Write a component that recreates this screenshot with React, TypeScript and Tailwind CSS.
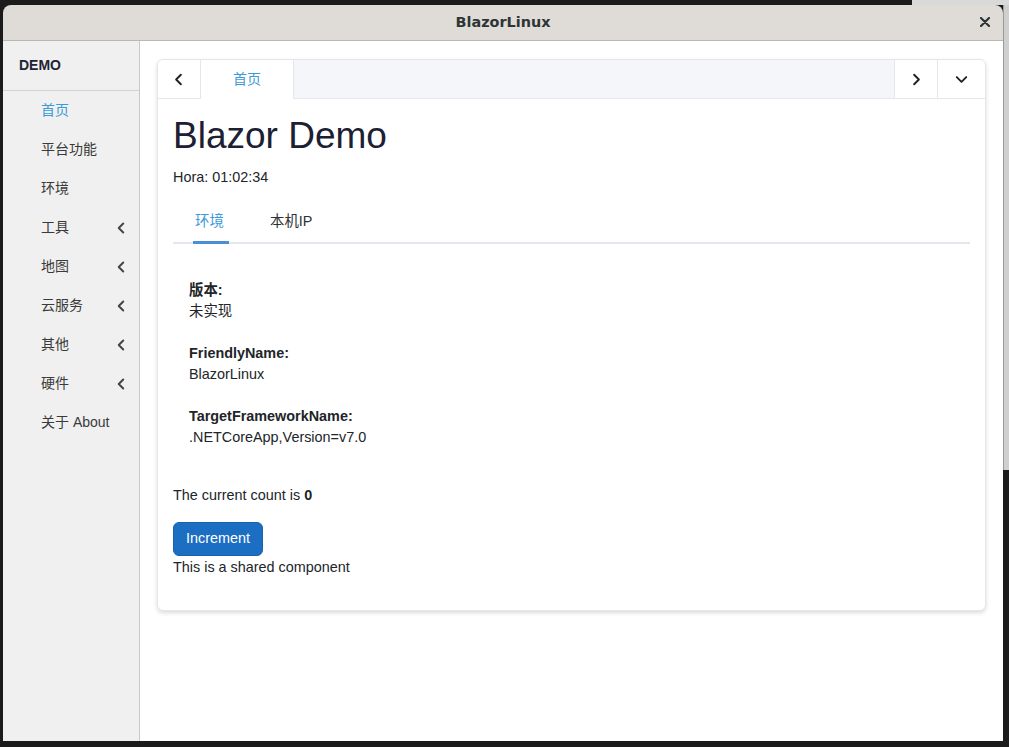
import React, { useState } from 'react'
import { ChevronLeft, ChevronRight, ChevronDown } from 'lucide-react'

const cjk = '"Liberation Sans", "Noto Sans CJK SC", Arial, sans-serif'

type NavItem = { label: string; active?: boolean; sub?: boolean }

const navItems: NavItem[] = [
    { label: '首页', active: true },
    { label: '平台功能' },
    { label: '环境' },
    { label: '工具', sub: true },
    { label: '地图', sub: true },
    { label: '云服务', sub: true },
    { label: '其他', sub: true },
    { label: '硬件', sub: true },
    { label: '关于 About' },
]

const envInfo = [
    { name: '版本:', value: '未实现' },
    { name: 'FriendlyName:', value: 'BlazorLinux' },
    { name: 'TargetFrameworkName:', value: '.NETCoreApp,Version=v7.0' },
]

const Sidebar: React.FC = () => (
    <aside className="w-[137px] shrink-0 bg-[#f0f0f0] border-r border-[#c8c8c8] flex flex-col">
        <div className="h-[50px] border-b border-[#d2d2d2] flex items-center px-[16px] text-[14px] font-bold text-[#1f2433]">
            DEMO
        </div>
        <nav className="flex flex-col">
            {navItems.map((item) => (
                <div key={item.label} className="h-[39px] flex items-center justify-between pl-[38px] pr-[9px] text-[14px]">
                    <span className={item.active ? 'text-[#3d9ad8]' : 'text-[#3a3a3a]'}>{item.label}</span>
                    {item.sub && <ChevronLeft size={18} strokeWidth={2.6} className="text-[#444]" />}
                </div>
            ))}
        </nav>
    </aside>
)

const TabHeader: React.FC = () => (
    <div className="flex h-[39px] rounded-t-[6px] overflow-hidden">
        <div className="w-[43px] flex items-center justify-center border-r border-b border-[#e4e7ed] bg-white text-[#222]">
            <ChevronLeft size={19} strokeWidth={2.4} className="-ml-[2px]" />
        </div>
        <div className="w-[93px] flex items-center justify-center border-r border-[#e4e7ed] bg-white text-[14px] text-[#3d9ad8]">
            首页
        </div>
        <div className="flex-1 bg-[#f5f6fa] border-b border-[#e4e7ed]" />
        <div className="w-[43px] flex items-center justify-center border-l border-b border-[#e4e7ed] bg-white text-[#222]">
            <ChevronRight size={19} strokeWidth={2.4} />
        </div>
        <div className="w-[48px] flex items-center justify-center border-l border-b border-[#e4e7ed] bg-white text-[#222]">
            <ChevronDown size={19} strokeWidth={2.4} />
        </div>
    </div>
)

const Home: React.FC = () => {
    const [count, setCount] = useState(0)
    const [tab, setTab] = useState(0)

    return (
        <div className="pl-[15px] pr-[15px] pt-[14px] pb-[32px] text-[14.4px] leading-[21px] text-[#212529]">
            <h1 className="text-[37px] leading-[45.6px] text-[#1c2033] mb-[8px]">Blazor Demo</h1>
            <p>Hora: 01:02:34</p>

            <div className="mt-[14px] flex pl-[20px] border-b-2 border-[#e4e7ed]">
                <button
                    onClick={() => setTab(0)}
                    className={`h-[42px] -mb-[2px] w-[36px] pl-[2px] pt-[1px] text-left border-b-[3px] ${tab === 0 ? 'border-[#4a90d4] text-[#3d9ad8]' : 'border-transparent text-[#303133]'}`}
                >
                    环境
                </button>
                <button
                    onClick={() => setTab(1)}
                    className={`h-[42px] -mb-[2px] ml-[41px] pt-[1px] text-left border-b-[3px] ${tab === 1 ? 'border-[#4a90d4] text-[#3d9ad8]' : 'border-transparent text-[#303133]'}`}
                >
                    本机IP
                </button>
            </div>

            <div className="pt-[36px] px-[16px] mb-[37px] flex flex-col gap-[21px]">
                {envInfo.map((e) => (
                    <div key={e.name}>
                        <div className="font-bold">{e.name}</div>
                        <div>{e.value}</div>
                    </div>
                ))}
            </div>

            <p className="mb-[16px]">
                The current count is <strong>{count}</strong>
            </p>
            <button
                onClick={() => setCount(count + 1)}
                className="h-[34px] px-[12px] rounded-[6px] bg-[#1b6ec2] border border-[#1861ac] text-white text-[14.4px]"
            >
                Increment
            </button>
            <p className="mt-[1px]">This is a shared component</p>
        </div>
    )
}

const App: React.FC = () => {
    return (
        <div className="w-[1009px] h-[747px] bg-[#1b1b1b] flex flex-col overflow-hidden" style={{ fontFamily: cjk }}>
            <div className="h-[5px] flex shrink-0">
                <div className="flex-1" />
                <div className="w-[97px] bg-[#d9d9d9]" />
            </div>
            <div className="flex h-[736px] shrink-0">
                <div className="w-[3px]" />
                <div className="w-[1000px] flex flex-col rounded-t-[8px] overflow-hidden">
                    <div className="h-[36px] shrink-0 bg-[#dfdcd8] border-b border-[#bdb7b0] flex items-center justify-center relative">
                        <span className="text-[14.4px] font-bold text-[#2e3436]" style={{ fontFamily: '"DejaVu Sans", sans-serif' }}>
                            BlazorLinux
                        </span>
                        <svg className="absolute right-[13px] top-[12px]" width="10" height="10" viewBox="0 0 10 10">
                            <path d="M1 1 L9 9 M9 1 L1 9" stroke="#2e3436" strokeWidth="2.2" strokeLinecap="round" />
                        </svg>
                    </div>
                    <div className="flex flex-1 min-h-0">
                        <Sidebar />
                        <main className="flex-1 bg-white px-[17px] pt-[18px]">
                            <div className="rounded-[6px] border border-[#e6e6e6] shadow-[0_2px_4px_rgba(0,0,0,0.14)] bg-white">
                                <TabHeader />
                                <Home />
                            </div>
                        </main>
                    </div>
                </div>
                <div className="w-[6px] flex flex-col">
                    <div className="h-[465px] bg-[#cfcfcf] border-l border-[#9a9a9a]" />
                    <div className="flex-1" />
                </div>
            </div>
        </div>
    )
}

export default App
